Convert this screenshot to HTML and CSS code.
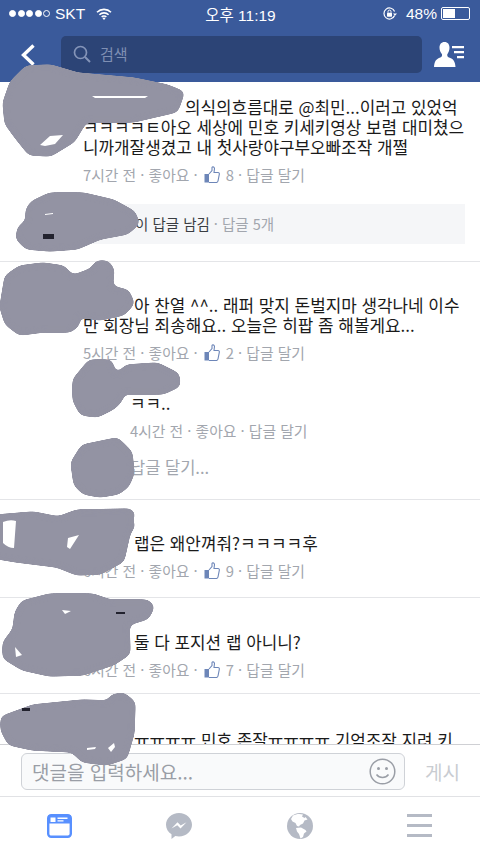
FILE: index.html
```html
<!DOCTYPE html>
<html lang="ko">
<head>
    <meta charset="UTF-8">
    <meta name="viewport" content="width=device-width, initial-scale=1.0">
    <title>댓글</title>
    <link rel="stylesheet" href="styles.css">
</head>
<body>
<div class="app">

    <header class="header">
        <div class="status">
            <div class="status-left">
                <span class="dots"><i></i><i></i><i></i><i></i><i class="off"></i></span>
                <span>SKT</span>
                <svg class="wifi" width="16" height="12" viewBox="0 0 16 12"><path d="M1 4.200a10 10 0 0 1 14 0M3.400 6.700a6.600 6.600 0 0 1 9.200 0M5.700 9a3.200 3.200 0 0 1 4.600 0" fill="none" stroke="#fff" stroke-width="1.600"/><path d="M8 12l-1.500-1.700a2 2 0 0 1 3 0z" fill="#fff"/></svg>
            </div>
            <div class="status-time">오후 11:19</div>
            <div class="status-right">
                <svg width="15" height="15" viewBox="0 0 15 15"><path d="M12.600 9.500a5.500 5.500 0 1 1 0-4" fill="none" stroke="#fff" stroke-width="1.200"/><path d="M11 7.500h4l-2 2.200z" fill="#fff"/><rect x="5" y="6.700" width="5" height="4" rx=".6" fill="#fff"/><path d="M6 6.700V5.600a1.500 1.500 0 0 1 3 0v1.100" fill="none" stroke="#fff"/></svg>
                <span class="pct">48%</span>
                <span class="battery"><span class="battery-fill"></span></span>
            </div>
        </div>
        <div class="nav">
            <svg class="back" width="16" height="24" viewBox="0 0 16 24"><path d="M13.500 2.500L3.500 12l10 9.500" fill="none" stroke="#fff" stroke-width="3.400"/></svg>
            <div class="search">
                <svg width="18" height="18" viewBox="0 0 18 18"><circle cx="7.500" cy="7.500" r="6" fill="none" stroke="#8494b8" stroke-width="1.700"/><path d="M12 12l5 5" stroke="#8494b8" stroke-width="1.900"/></svg>
                <span>검색</span>
            </div>
            <svg class="friends" width="31" height="25" viewBox="0 0 31 25"><path d="M10.500 0c3.300 0 5 2.400 5 5.800 0 2.600-.9 4.800-2.200 6.400-.3 1.800.3 2.800 2.400 3.600 3.300 1.300 5.300 3 5.800 9.200H0c.4-6 2.400-7.900 5.600-9.200 2.100-.8 2.700-1.800 2.400-3.600C6.500 10.600 5.500 8.400 5.500 5.800 5.500 2.400 7.200 0 10.500 0z" fill="#fff"/><path d="M18 4h12v2.200H18zM20 9h10v2.200H20zM23 14h7v2.200h-7z" fill="#fff"/></svg>
        </div>
    </header>

    <main class="feed">
        <section class="comment first">
            <p class="text indent-long">의식의흐름대로 @최민...이러고 있었억<br>ㅋㅋㅋㅋㅌ아오 세상에 민호 키세키영상 보렴 대미쳤으<br>니까개잘생겼고 내 첫사랑야구부오빠조작 개쩔</p>
            <div class="meta"><span>7시간 전 · 좋아요 ·</span>
                <svg class="thumb" width="16" height="17" viewBox="0 0 16 17"><rect x="0.500" y="8" width="4.500" height="8.500" fill="#6d86b8"/><path d="M5 8l3-3.500V1.500c0-1 2.300-1 2.500 1L10 6.500h4c1 0 1.500.8 1.300 1.800l-1.300 6.700c-.2 1-.8 1.500-1.800 1.500H5" fill="none" stroke="#6d86b8" stroke-width="1.100"/></svg>
                <span>8 · 답글 달기</span></div>
            <div class="replies"><span class="reply-who">이 답글 남김</span> · 답글 5개</div>
        </section>

        <section class="comment second">
            <p class="text indent-short">아 찬열 ^^.. 래퍼 맞지 돈벌지마 생각나네 이수<br>만 회장님 죄송해요.. 오늘은 히팝 좀 해볼게요...</p>
            <div class="meta"><span>5시간 전 · 좋아요 ·</span>
                <svg class="thumb" width="16" height="17" viewBox="0 0 16 17"><rect x="0.500" y="8" width="4.500" height="8.500" fill="#6d86b8"/><path d="M5 8l3-3.500V1.500c0-1 2.300-1 2.500 1L10 6.500h4c1 0 1.500.8 1.300 1.800l-1.300 6.700c-.2 1-.8 1.500-1.800 1.500H5" fill="none" stroke="#6d86b8" stroke-width="1.100"/></svg>
                <span>2 · 답글 달기</span></div>
            <div class="sub">
                <p class="text">ㅋㅋ..</p>
                <div class="meta"><span>4시간 전 · 좋아요 · 답글 달기</span></div>
                <p class="write-reply">답글 달기...</p>
            </div>
        </section>

        <section class="comment third">
            <p class="text indent-short">랩은 왜안껴줘?ㅋㅋㅋㅋ후</p>
            <div class="meta"><span>6시간 전 · 좋아요 ·</span>
                <svg class="thumb" width="16" height="17" viewBox="0 0 16 17"><rect x="0.500" y="8" width="4.500" height="8.500" fill="#6d86b8"/><path d="M5 8l3-3.500V1.500c0-1 2.300-1 2.500 1L10 6.500h4c1 0 1.500.8 1.300 1.800l-1.300 6.700c-.2 1-.8 1.500-1.800 1.500H5" fill="none" stroke="#6d86b8" stroke-width="1.100"/></svg>
                <span>9 · 답글 달기</span></div>
        </section>

        <section class="comment fourth">
            <p class="text indent-short">둘 다 포지션 랩 아니니?</p>
            <div class="meta"><span>6시간 전 · 좋아요 ·</span>
                <svg class="thumb" width="16" height="17" viewBox="0 0 16 17"><rect x="0.500" y="8" width="4.500" height="8.500" fill="#6d86b8"/><path d="M5 8l3-3.500V1.500c0-1 2.300-1 2.500 1L10 6.500h4c1 0 1.500.8 1.300 1.800l-1.300 6.700c-.2 1-.8 1.500-1.800 1.500H5" fill="none" stroke="#6d86b8" stroke-width="1.100"/></svg>
                <span>7 · 답글 달기</span></div>
        </section>

        <section class="comment fifth">
            <p class="text indent-short">ㅠㅠㅠㅠ 민호 존잘ㅠㅠㅠㅠ 기억조작 지려 키</p>
        </section>
    </main>

    <div class="composer">
        <div class="input">
            <span>댓글을 입력하세요...</span>
            <svg width="27" height="27" viewBox="0 0 27 27"><circle cx="13.500" cy="13.500" r="12.300" fill="none" stroke="#9a9ea6" stroke-width="1.500"/><circle cx="9.500" cy="10.500" r="1.500" fill="#9a9ea6"/><circle cx="17.500" cy="10.500" r="1.500" fill="#9a9ea6"/><path d="M7.500 16.500c3 4 9 4 12 0" fill="none" stroke="#9a9ea6" stroke-width="1.500"/></svg>
        </div>
        <span class="post">게시</span>
    </div>

    <nav class="tabs">
        <svg width="25" height="24" viewBox="0 0 25 24"><rect x="1.200" y="1.200" width="22.600" height="21.600" rx="3" fill="#fff" stroke="#5890ff" stroke-width="2.400"/><rect x="1.200" y="1.200" width="22.600" height="8.300" fill="#5890ff"/><path d="M3.500 3.500h5v4.500h-5zM10.500 3.500h10v1.500h-10zM10.500 6.300h6v1.200h-6z" fill="#fff"/></svg>
        <svg width="26" height="26" viewBox="0 0 26 26"><path d="M13 0c7.200 0 13 5.300 13 11.800S20.200 23.600 13 23.600c-1.300 0-2.500-.2-3.700-.5L5.500 26v-4.700C2.100 19.100 0 15.700 0 11.800 0 5.300 5.800 0 13 0z" fill="#b5bac5"/><path d="M5.500 15.500l6-6.300 3.200 3.300 5.800-3.300-6 6.300-3.200-3.300z" fill="#fff"/></svg>
        <svg width="26" height="26" viewBox="0 0 26 26"><circle cx="13" cy="13" r="13" fill="#b5bac5"/><path d="M6 2.500C9 .8 13 .5 16 1.500l-1 2 2.500 1.500 1-1 2 2.500-3 1-1.500 3-3 1.500-1 1.500-2-.5-1.500-3-3-1.500-1.500-2.500z" fill="#fff"/><path d="M9 15l5-.5 4.500 2.500 1 1.500-2.500 2-1 3.500-2.500 1.500-1.500-4.500-2-2.500z" fill="#fff"/></svg>
        <span class="menu"><i></i><i></i><i></i></span>
    </nav>

    <!-- scribbled-out avatars and names, drawn over everything -->
    <svg class="scribbles" width="480" height="854" viewBox="0 0 480 854">
        <defs>
            <filter id="smear" filterUnits="userSpaceOnUse" x="-20" y="0" width="520" height="854">
                <feGaussianBlur stdDeviation="3"/>
                <feColorMatrix type="matrix" values="1 0 0 0 0 0 1 0 0 0 0 0 1 0 0 0 0 0 16 -7"/>
            </filter>
        </defs>
        <g filter="url(#smear)">
            <path class="blob" d="M12 83L27 68 50 67 77 75 133 80 167 87 182 93 176 110 133 120 85 120 73 140 50 154 30 153 18 138 7 123 5 103z"/>
            <path class="blob" d="M33 203L50 195 83 195 113 202 133 213 137 223 127 232 100 237 77 247 50 249 27 247 18 238 20 228 28 222 28 210z"/>
            <path class="blob" d="M7 277L20 268 43 265 63 268 72 278 93 270 97 263 107 263 112 270 110 288 127 292 132 303 123 313 100 318 80 315 75 317 78 323 70 330 43 330 20 333 7 323 2 307z"/>
            <path class="blob" d="M75 380L90 362 110 362 115 378 127 367 157 365 177 375 178 385 163 392 122 392 120 400 113 407 97 415 82 413 75 400z"/>
            <path class="blob" d="M73 463L83 447 117 440 130 453 132 473 127 485 118 492 100 495 84 492 76 484z"/>
            <path class="blob" d="M-14 518L33 514 58 519 77 512 130 511 133 515 128 520 133 525 128 533 122 560 100 572 77 573 57 565 17 560-14 555z"/>
            <path class="blob" d="M23 603L50 596 93 596 110 602 147 602 152 607 147 617 127 623 128 653 113 663 83 673 50 674 23 668 5 657 5 643 15 630 17 613z"/>
            <path class="blob" d="M3 718L33 707 83 702 110 703 112 697 123 695 133 703 132 733 125 757 107 763 83 760 73 750 33 748 10 743 3 730z"/>
        </g>
        <path class="gap" d="M92 96l56 0-3 2-50 0zM40 145l10-9 13-1-8 9-10 2zM68 538l11-3-9 14-3-2zM62 610l9 1-6 3zM15 647l7 8-6 2z"/>
        <path class="gap" d="M3 522Q10 519 16 521L14 548Q8 548 3 543zM45 214l8-1 0 1-8 1zM87 748l9-1-1 2-8 1zM108 748l6-5 1 4-4 5z"/>
        <path class="mark" d="M43 234h11v5H43zM116 612h9v2h-9zM22 708h8v3h-8z"/>
    </svg>
</div>
</body>
</html>
```

FILE: styles.css
```css
* { box-sizing: border-box; }
html, body { margin: 0; padding: 0; }
body {
    font-family: "Noto Sans CJK KR", sans-serif;
    background: #fff;
    color: #1a1a1a;
}
p { margin: 0; }

.app {
    position: relative;
    width: 480px;
    height: 854px;
    display: flex;
    flex-direction: column;
    overflow: hidden;
}

/* top bar */
.header {
    height: 82px;
    background: #3a5a9b;
    color: #fff;
}
.status {
    height: 27px;
    padding: 0 8px 0 9px;
    display: grid;
    grid-template-columns: 1fr auto 1fr;
    align-items: center;
    font-family: "Liberation Sans", "Noto Sans CJK KR", sans-serif;
    font-size: 15.500px;
}
.status-left { display: flex; align-items: center; }
.dots { display: flex; gap: 1.500px; margin-right: 5px; }
.dots i {
    width: 7px;
    height: 7px;
    border-radius: 50%;
    background: #fff;
    border: 1px solid #fff;
}
.dots i.off { background: none; }
.wifi { margin-left: 11px; }
.status-right {
    display: flex;
    align-items: center;
    justify-content: flex-end;
}
.pct { margin-left: 9px; }
.battery {
    width: 29px;
    height: 13px;
    margin-left: 4px;
    margin-right: 2px;
    border: 1px solid #fff;
    border-radius: 2px;
    padding: 1px;
    display: flex;
}
.battery-fill { width: 48%; background: #fff; }

.nav {
    height: 55px;
    padding: 0 15px 0 20px;
    display: flex;
    align-items: center;
}
.back { flex-shrink: 0; }
.search {
    width: 361px;
    height: 37px;
    margin-left: 25px;
    margin-right: 12px;
    padding-left: 12px;
    padding-bottom: 2px;
    display: flex;
    align-items: center;
    gap: 9px;
    background: #2c4476;
    border-radius: 5px;
    color: #7f8fb3;
    font-size: 15px;
}

/* comments */
.feed {
    flex: 1;
    overflow: hidden;
}
.comment {
    padding-left: 83px;
    border-bottom: 1px solid #e4e5e8;
}
.first { padding-top: 15px; padding-bottom: 17px; }
.second { padding-top: 33px; padding-bottom: 22px; }
.third { padding-top: 33px; padding-bottom: 17px; }
.fourth { padding-top: 34px; padding-bottom: 14px; }
.fifth { padding-top: 36px; border-bottom: none; }

.text {
    font-size: 16.900px;
    line-height: 20px;
    white-space: nowrap;
}
.indent-long { text-indent: 102px; }
.indent-short { text-indent: 51px; }

.meta {
    height: 20px;
    margin-top: 7px;
    display: flex;
    align-items: center;
    gap: 6px;
    font-size: 14.800px;
    color: #a2a6ae;
    white-space: nowrap;
}
.replies {
    height: 40px;
    margin-top: 20px;
    margin-right: 15px;
    padding-left: 52px;
    padding-bottom: 2px;
    display: flex;
    align-items: center;
    gap: 4px;
    background: #f5f6f8;
    font-size: 14.500px;
    color: #a2a6ae;
}
.reply-who { color: #3a3d42; }

.sub { padding-top: 31px; padding-left: 47px; }
.write-reply {
    margin-top: 17px;
    font-size: 16.500px;
    line-height: 20px;
    color: #a2a6ae;
}

/* composer + tabs */
.composer {
    height: 53px;
    padding: 8px 20px 7px 21px;
    display: flex;
    align-items: center;
    justify-content: space-between;
    background: #fff;
    border-top: 1px solid #cfd0d4;
    border-bottom: 1px solid #e1e2e5;
}
.input {
    width: 384px;
    height: 37px;
    padding: 0 8px 0 10px;
    display: flex;
    align-items: center;
    justify-content: space-between;
    background: #f9fafb;
    border: 1px solid #cfd2d7;
    border-radius: 6px;
    font-size: 19px;
    color: #9a9ea6;
}
.post { font-size: 19px; color: #c9ccd1; }

.tabs {
    height: 57px;
    padding: 0 48px 0 47px;
    display: flex;
    align-items: center;
    justify-content: space-between;
}
.menu {
    width: 25px;
    display: flex;
    flex-direction: column;
    gap: 7px;
}
.menu i { height: 3px; background: #b5bac5; }

/* scribbles lie over the whole screen */
.scribbles {
    position: absolute;
    left: 0;
    top: 0;
    pointer-events: none;
}
.blob {
    fill: #9393a3;
    stroke: #9393a3;
    stroke-width: 5;
    stroke-linejoin: round;
}
.gap { fill: #fff; }
.mark { fill: #22222e; }
```
